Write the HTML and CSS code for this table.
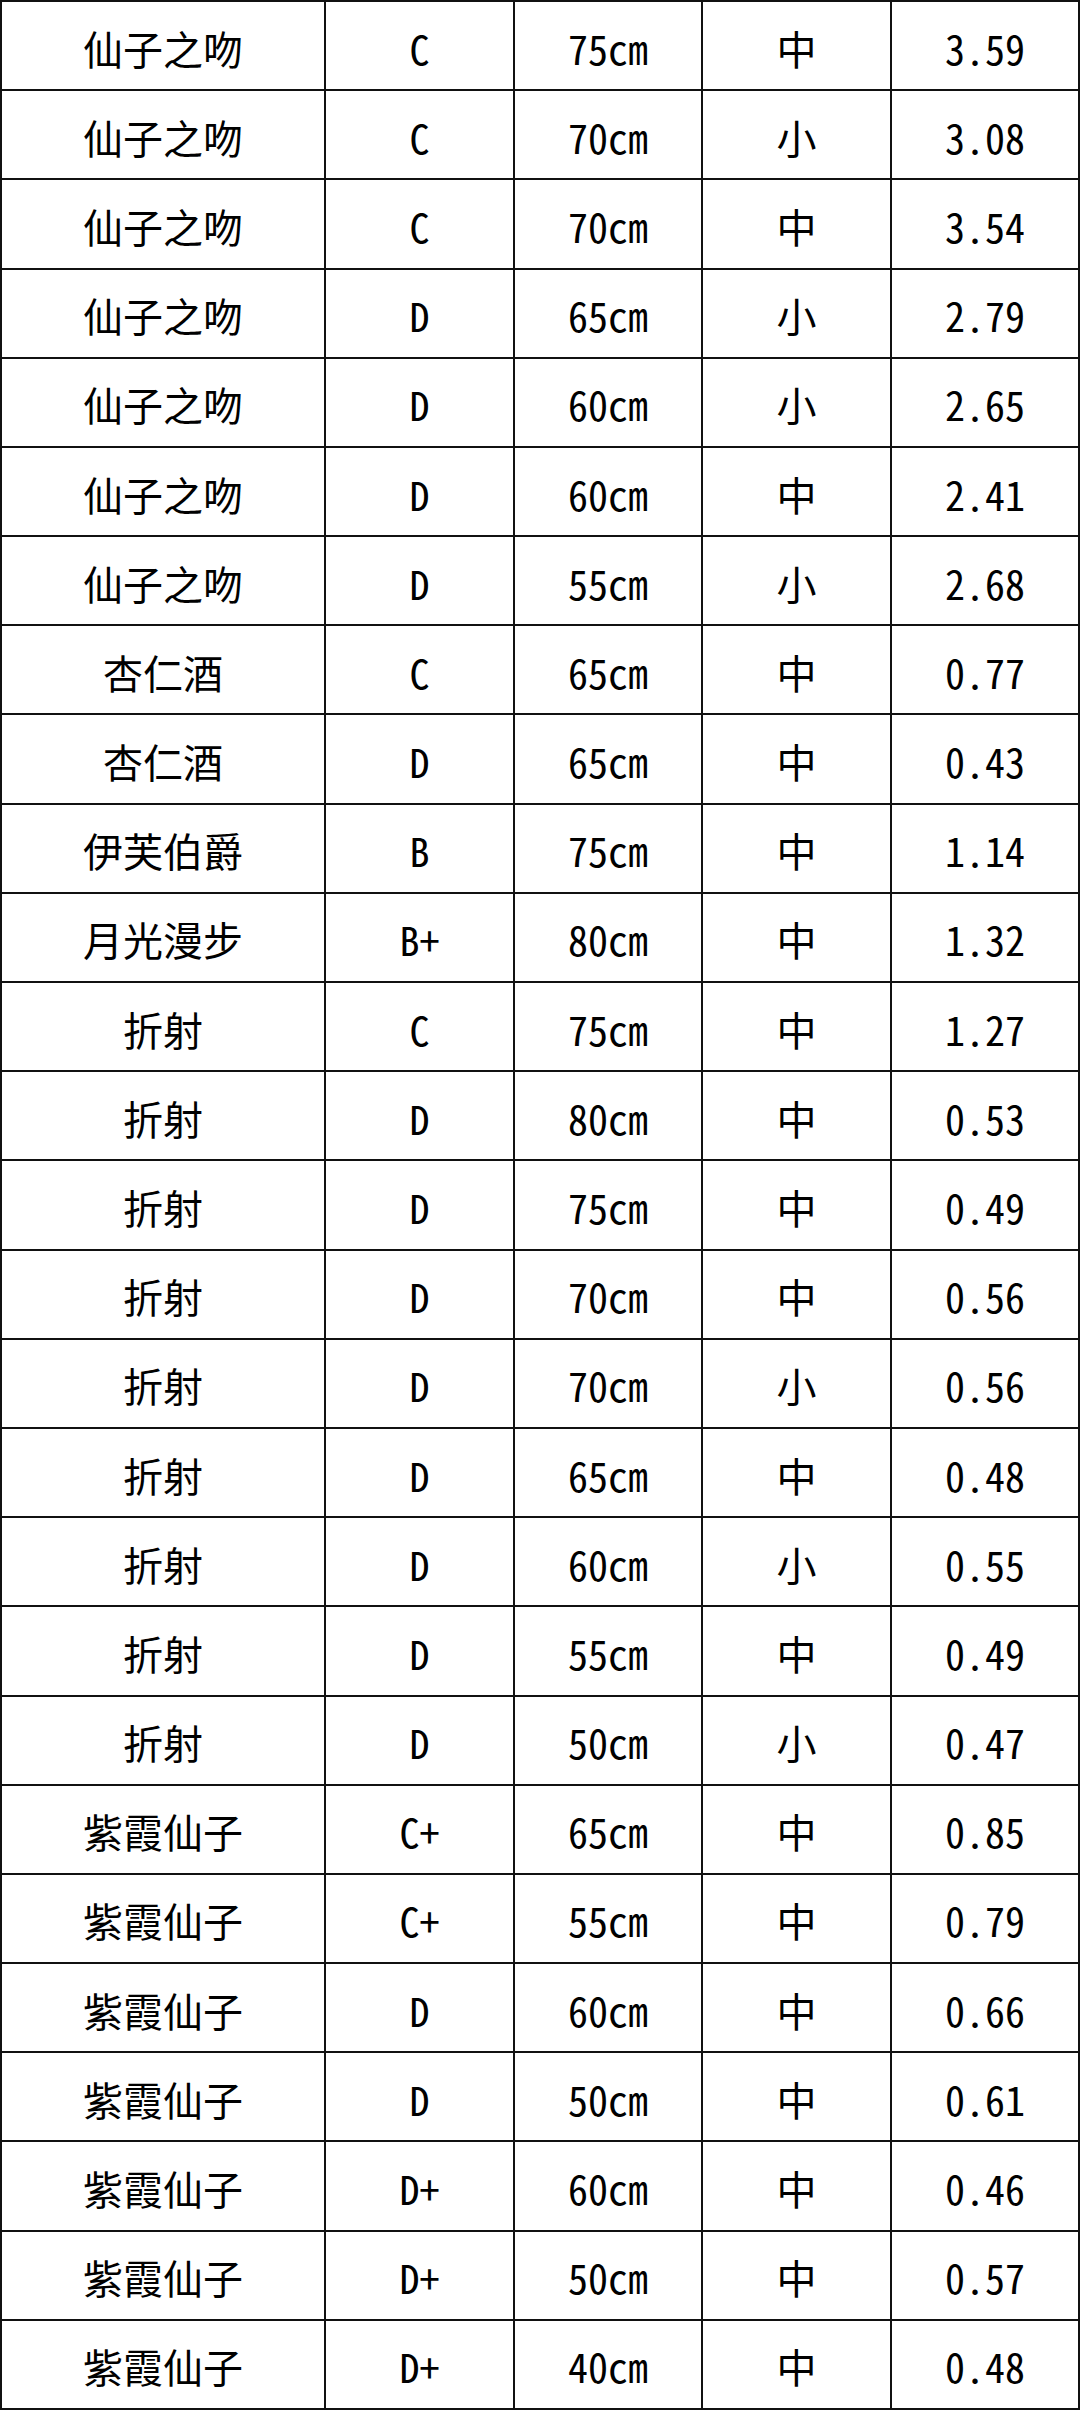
FILE: index.html
```html
<!DOCTYPE html>
<html lang="zh-CN">
<head>
<meta charset="utf-8">
<title>表格</title>
<link rel="stylesheet" href="styles.css">
</head>
<body>
<div class="sheet">
<div class="cell">仙子之吻</div><div class="cell">C</div><div class="cell">75cm</div><div class="cell">中</div><div class="cell">3.59</div>
<div class="cell">仙子之吻</div><div class="cell">C</div><div class="cell">70cm</div><div class="cell">小</div><div class="cell">3.08</div>
<div class="cell">仙子之吻</div><div class="cell">C</div><div class="cell">70cm</div><div class="cell">中</div><div class="cell">3.54</div>
<div class="cell">仙子之吻</div><div class="cell">D</div><div class="cell">65cm</div><div class="cell">小</div><div class="cell">2.79</div>
<div class="cell">仙子之吻</div><div class="cell">D</div><div class="cell">60cm</div><div class="cell">小</div><div class="cell">2.65</div>
<div class="cell">仙子之吻</div><div class="cell">D</div><div class="cell">60cm</div><div class="cell">中</div><div class="cell">2.41</div>
<div class="cell">仙子之吻</div><div class="cell">D</div><div class="cell">55cm</div><div class="cell">小</div><div class="cell">2.68</div>
<div class="cell">杏仁酒</div><div class="cell">C</div><div class="cell">65cm</div><div class="cell">中</div><div class="cell">0.77</div>
<div class="cell">杏仁酒</div><div class="cell">D</div><div class="cell">65cm</div><div class="cell">中</div><div class="cell">0.43</div>
<div class="cell">伊芙伯爵</div><div class="cell">B</div><div class="cell">75cm</div><div class="cell">中</div><div class="cell">1.14</div>
<div class="cell">月光漫步</div><div class="cell">B+</div><div class="cell">80cm</div><div class="cell">中</div><div class="cell">1.32</div>
<div class="cell">折射</div><div class="cell">C</div><div class="cell">75cm</div><div class="cell">中</div><div class="cell">1.27</div>
<div class="cell">折射</div><div class="cell">D</div><div class="cell">80cm</div><div class="cell">中</div><div class="cell">0.53</div>
<div class="cell">折射</div><div class="cell">D</div><div class="cell">75cm</div><div class="cell">中</div><div class="cell">0.49</div>
<div class="cell">折射</div><div class="cell">D</div><div class="cell">70cm</div><div class="cell">中</div><div class="cell">0.56</div>
<div class="cell">折射</div><div class="cell">D</div><div class="cell">70cm</div><div class="cell">小</div><div class="cell">0.56</div>
<div class="cell">折射</div><div class="cell">D</div><div class="cell">65cm</div><div class="cell">中</div><div class="cell">0.48</div>
<div class="cell">折射</div><div class="cell">D</div><div class="cell">60cm</div><div class="cell">小</div><div class="cell">0.55</div>
<div class="cell">折射</div><div class="cell">D</div><div class="cell">55cm</div><div class="cell">中</div><div class="cell">0.49</div>
<div class="cell">折射</div><div class="cell">D</div><div class="cell">50cm</div><div class="cell">小</div><div class="cell">0.47</div>
<div class="cell">紫霞仙子</div><div class="cell">C+</div><div class="cell">65cm</div><div class="cell">中</div><div class="cell">0.85</div>
<div class="cell">紫霞仙子</div><div class="cell">C+</div><div class="cell">55cm</div><div class="cell">中</div><div class="cell">0.79</div>
<div class="cell">紫霞仙子</div><div class="cell">D</div><div class="cell">60cm</div><div class="cell">中</div><div class="cell">0.66</div>
<div class="cell">紫霞仙子</div><div class="cell">D</div><div class="cell">50cm</div><div class="cell">中</div><div class="cell">0.61</div>
<div class="cell">紫霞仙子</div><div class="cell">D+</div><div class="cell">60cm</div><div class="cell">中</div><div class="cell">0.46</div>
<div class="cell">紫霞仙子</div><div class="cell">D+</div><div class="cell">50cm</div><div class="cell">中</div><div class="cell">0.57</div>
<div class="cell">紫霞仙子</div><div class="cell">D+</div><div class="cell">40cm</div><div class="cell">中</div><div class="cell">0.48</div>
</div>
</body>
</html>
```
FILE: styles.css
```css
html, body {
  margin: 0;
  padding: 0;
  background: #ffffff;
}

.sheet {
  box-sizing: border-box;
  width: 1080px;
  height: 2410px;
  padding: 2px;
  display: grid;
  grid-template-columns: 322px 187px 186px 187px 186px;
  grid-template-rows: repeat(27, 1fr);
  gap: 2px;
  background: #111111;
}

.cell {
  background: #ffffff;
  display: flex;
  align-items: center;
  justify-content: center;
  padding-top: 4px;
  box-sizing: border-box;
  font-family: "Noto Sans Mono CJK SC", "Noto Sans CJK SC", "DejaVu Sans Mono", monospace;
  font-size: 40px;
  line-height: 1;
  color: #000000;
}
```
